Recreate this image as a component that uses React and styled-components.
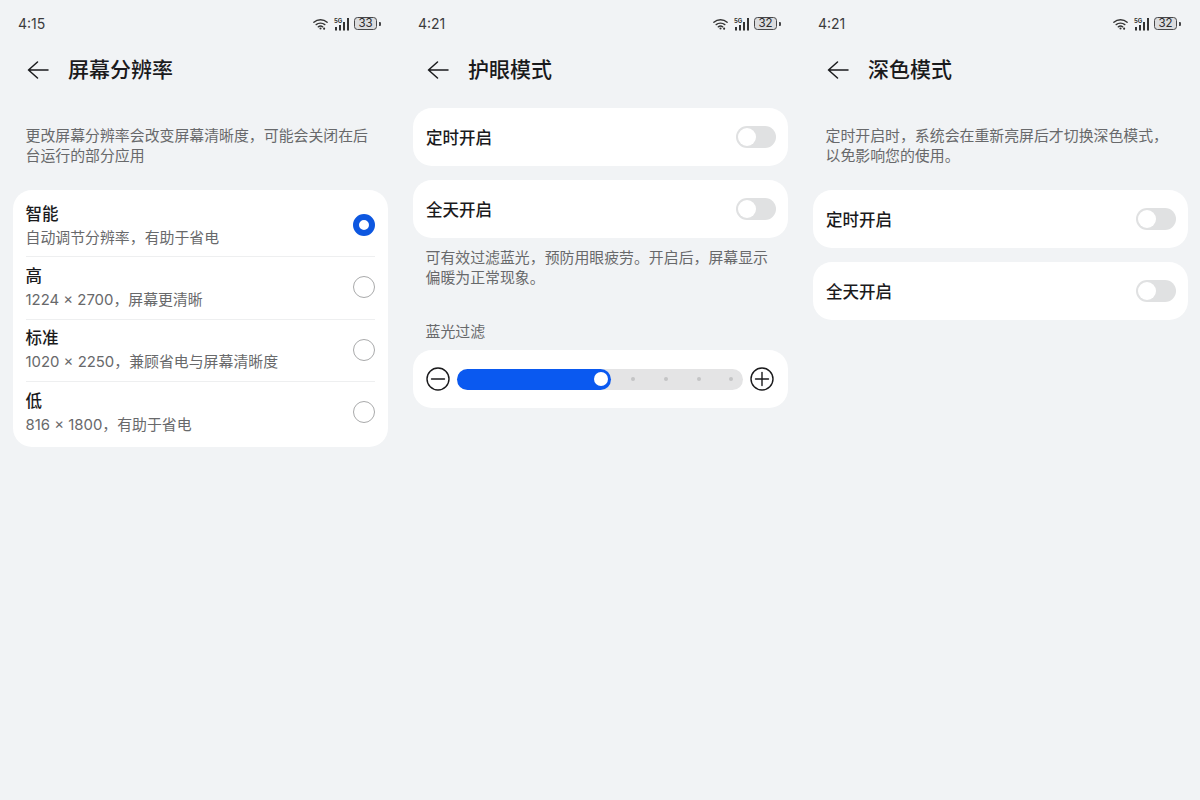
import React from 'react';
import styled, { createGlobalStyle } from 'styled-components';

const GlobalStyle = createGlobalStyle`
  html, body {
    margin: 0;
    padding: 0;
    background: #f1f3f5;
  }
  * {
    box-sizing: border-box;
  }
`;

const Page = styled.div`
  width: 1200px;
  height: 800px;
  display: grid;
  grid-template-columns: repeat(3, 400px);
  background: #f1f3f5;
  font-family: Inter, "Noto Sans CJK SC", sans-serif;
  overflow: hidden;
`;

const Screen = styled.section`
  display: flex;
  flex-direction: column;
  padding: 0 12.5px;
`;

const StatusBar = styled.div`
  height: 46px;
  padding: 1px 10.5px 0 5.5px;
  display: flex;
  align-items: center;
  justify-content: space-between;
`;

const Time = styled.span`
  font-size: 14px;
  color: #3b3b3d;
`;

const StatusIcons = styled.div`
  display: flex;
  align-items: center;
`;

const Battery = styled.div`
  position: relative;
  width: 23px;
  height: 13px;
  margin-left: 4px;
  border: 1.2px solid #48484a;
  border-radius: 3.5px;
  background: #dcdddf;
  font-size: 11.5px;
  line-height: 10.5px;
  text-align: center;
  color: #2c2c2e;

  &::after {
    content: '';
    position: absolute;
    right: -4.5px;
    top: 3.5px;
    width: 2px;
    height: 4px;
    border-radius: 0 1px 1px 0;
    background: #48484a;
  }
`;

const Header = styled.header`
  height: 48px;
  display: flex;
  align-items: center;
  gap: 19.5px;
  padding-left: 14px;
`;

const Title = styled.h1`
  margin: 0;
  font-size: 21px;
  font-weight: 500;
  color: #1a1a1c;
  line-height: 28px;
`;

const Note = styled.p`
  margin: ${(p) => p.$margin};
  padding: 0 13px;
  font-size: 14.9px;
  line-height: 20px;
  color: #68696b;
`;

const Card = styled.div`
  background: #fff;
  border-radius: 19px;
`;

const OptionsCard = styled(Card)`
  padding: 4px 0;
`;

const ToggleCard = styled(Card)`
  height: 58px;
  margin-top: ${(p) => p.$top}px;
  padding: 0 12px 1px 13.5px;
  display: flex;
  align-items: center;
  justify-content: space-between;
`;

const ToggleLabel = styled.span`
  font-size: 16.5px;
  font-weight: 500;
  color: #1a1a1c;
`;

const Switch = styled.div`
  width: 40px;
  height: 22px;
  padding: 2px;
  border-radius: 11px;
  background: #e0e1e2;
  display: flex;

  &::before {
    content: '';
    width: 18px;
    height: 18px;
    border-radius: 50%;
    background: #fff;
  }
`;

const OptionRow = styled.div`
  height: 62.3px;
  margin: 0 13px;
  padding-bottom: ${(p) => (p.$first ? 0 : 1)}px;
  display: flex;
  align-items: center;
  justify-content: space-between;
  border-top: ${(p) => (p.$first ? 'none' : '1px solid #eeeff0')};
`;

const OptionText = styled.div`
  display: flex;
  flex-direction: column;
  gap: 3px;
`;

const OptionTitle = styled.span`
  font-size: 16.5px;
  line-height: 22px;
  font-weight: 500;
  color: #1a1a1c;
`;

const OptionSub = styled.span`
  font-size: 14.9px;
  line-height: 20px;
  color: #68696b;
`;

const Radio = styled.div`
  width: 22px;
  height: 22px;
  border-radius: 50%;
  border: ${(p) => (p.$on ? '6.5px solid #0d57e0' : '1px solid #a9aaab')};
  background: #fff;
`;

const SectionLabel = styled.div`
  margin-top: 34px;
  padding: 0 13px;
  font-size: 14.9px;
  line-height: 20px;
  color: #68696b;
`;

const SliderCard = styled(Card)`
  height: 58px;
  margin-top: 8px;
  padding: 0 14px 0 13px;
  display: flex;
  align-items: center;
  gap: 7px;
`;

const Track = styled.div`
  flex: 1;
  height: 21px;
  border-radius: 11px;
  background: #e4e4e5;
  display: flex;
  align-items: center;
`;

const Fill = styled.div`
  width: 154px;
  height: 21px;
  border-radius: 11px;
  padding-right: 3px;
  background: #0a59f0;
  display: flex;
  align-items: center;
  justify-content: flex-end;

  &::after {
    content: '';
    width: 14px;
    height: 14px;
    border-radius: 50%;
    background: #fff;
  }
`;

const Dots = styled.div`
  flex: 1;
  padding: 0 9px 0 20.5px;
  display: flex;
  justify-content: space-between;
`;

const Dot = styled.span`
  width: 4px;
  height: 4px;
  border-radius: 50%;
  background: #c4c5c6;
`;

const WifiIcon = () => (
  <svg width="15" height="12" viewBox="0 0 17 13" fill="none" stroke="#333" strokeWidth="1.6" strokeLinecap="round">
    <path d="M1 4.6C5.2 .8 11.8 .8 16 4.6" />
    <path d="M3.6 7.2C6.3 4.9 10.7 4.9 13.4 7.2" />
    <path d="M6 9.7C7.3 8.7 9.7 8.7 11 9.7" />
    <circle cx="8.5" cy="11.6" r="1.2" fill="#333" stroke="none" />
    <circle cx="12.6" cy="11.8" r="1.2" fill="#333" stroke="none" />
  </svg>
);

const SignalIcon = () => (
  <svg width="16" height="14" viewBox="0 0 16 14" style={{ marginLeft: 6 }}>
    <text x="0" y="5.5" fontSize="6" fontWeight="700" fill="#333" fontFamily="Inter, sans-serif">5G</text>
    <rect x="1" y="10" width="2" height="3.5" fill="#333" />
    <rect x="5" y="8" width="2" height="5.5" fill="#333" />
    <rect x="9" y="5" width="2" height="8.5" fill="#333" />
    <rect x="13" y="1" width="2" height="12.5" fill="#333" />
  </svg>
);

const BackIcon = () => (
  <svg width="22" height="18" viewBox="0 0 22 18" fill="none" stroke="#1a1a1c" strokeWidth="1.5" strokeLinecap="round" strokeLinejoin="round">
    <path d="M21 9H1.5M10.5 1 1.5 9l9 8" />
  </svg>
);

const CircleIcon = ({ plus }) => (
  <svg width="24" height="24" viewBox="0 0 24 24" fill="none" stroke="#1a1a1c" strokeWidth="1.4" strokeLinecap="round" style={{ flexShrink: 0 }}>
    <circle cx="12" cy="12" r="11" />
    <path d="M5.5 12h13" />
    {plus && <path d="M12 5.5v13" />}
  </svg>
);

const options = [
  { title: '智能', sub: '自动调节分辨率\uFF0C有助于省电', on: true },
  { title: '高', sub: '1224 × 2700\uFF0C屏幕更清晰' },
  { title: '标准', sub: '1020 × 2250\uFF0C兼顾省电与屏幕清晰度' },
  { title: '低', sub: '816 × 1800\uFF0C有助于省电' },
];

const resolutionNote = '更改屏幕分辨率会改变屏幕清晰度\uFF0C可能会关闭在后台运行的部分应用';
const eyeNote = '可有效过滤蓝光\uFF0C预防用眼疲劳。开启后\uFF0C屏幕显示偏暖为正常现象。';
const darkNote = '定时开启时\uFF0C系统会在重新亮屏后才切换深色模式\uFF0C以免影响您的使用。';

function Top({ time, level, title }) {
  return (
    <>
      <StatusBar>
        <Time>{time}</Time>
        <StatusIcons>
          <WifiIcon />
          <SignalIcon />
          <Battery>{level}</Battery>
        </StatusIcons>
      </StatusBar>
      <Header>
        <BackIcon />
        <Title>{title}</Title>
      </Header>
    </>
  );
}

function ToggleRow({ label, top }) {
  return (
    <ToggleCard $top={top}>
      <ToggleLabel>{label}</ToggleLabel>
      <Switch />
    </ToggleCard>
  );
}

export default function App() {
  return (
    <Page>
      <GlobalStyle />
      <Screen>
        <Top time="4:15" level="33" title="屏幕分辨率" />
        <Note $margin="32px 0 24px">{resolutionNote}</Note>
        <OptionsCard>
          {options.map((o, i) => (
            <OptionRow key={o.title} $first={i === 0}>
              <OptionText>
                <OptionTitle>{o.title}</OptionTitle>
                <OptionSub>{o.sub}</OptionSub>
              </OptionText>
              <Radio $on={o.on} />
            </OptionRow>
          ))}
        </OptionsCard>
      </Screen>

      <Screen>
        <Top time="4:21" level="32" title="护眼模式" />
        <ToggleRow label="定时开启" top={14} />
        <ToggleRow label="全天开启" top={14} />
        <Note $margin="10px 0 0">{eyeNote}</Note>
        <SectionLabel>蓝光过滤</SectionLabel>
        <SliderCard>
          <CircleIcon />
          <Track>
            <Fill />
            <Dots>
              <Dot />
              <Dot />
              <Dot />
              <Dot />
            </Dots>
          </Track>
          <CircleIcon plus />
        </SliderCard>
      </Screen>

      <Screen>
        <Top time="4:21" level="32" title="深色模式" />
        <Note $margin="32px 0 24px">{darkNote}</Note>
        <ToggleRow label="定时开启" top={0} />
        <ToggleRow label="全天开启" top={14} />
      </Screen>
    </Page>
  );
}
